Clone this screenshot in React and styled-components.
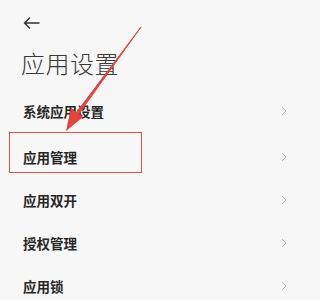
import React from "react";
import styled, { createGlobalStyle } from "styled-components";

const Global = createGlobalStyle`
  html, body { margin: 0; padding: 0; background: #f7f7f7; }
  body { font-family: "Noto Sans CJK SC", "Noto Sans", sans-serif; }
`;

const Page = styled.div`
  position: relative;
  width: 308px;
  height: 300px;
  overflow: hidden;
  background: #f7f7f7;
`;

const Header = styled.div`
  display: flex;
  align-items: center;
  height: 22px;
  padding: 12px 0 0 23px;
`;

const Title = styled.h1`
  margin: 17px 0 0 21px;
  font-size: 24px;
  line-height: 24px;
  font-weight: 300;
  color: #3a3a3a;
  letter-spacing: 0.5px;
`;

const List = styled.div`
  display: flex;
  flex-direction: column;
  margin-top: 14px;
`;

const Row = styled.div`
  position: relative;
  display: flex;
  align-items: center;
  justify-content: space-between;
  height: 43px;
  padding: 0 21px 0 23px;
  margin-bottom: ${(p) => (p.$first ? "3px" : "0")};
`;

const Label = styled.span`
  font-size: 13.5px;
  font-weight: 700;
  color: #262626;
`;

const Highlight = styled.div`
  position: absolute;
  left: 9px;
  top: -3px;
  width: 131px;
  height: 39px;
  border: 1.5px solid #e0514f;
`;

const Overlay = styled.svg`
  position: absolute;
  left: 0;
  top: 0;
  pointer-events: none;
`;

const Chevron = () => (
  <svg width="6" height="10" viewBox="0 0 6 10">
    <path d="M1 1 L5 5 L1 9" fill="none" stroke="#b8b8b8" strokeWidth="1" />
  </svg>
);

const BackArrow = () => (
  <svg width="17" height="12" viewBox="0 0 17 12">
    <path d="M16 6 H1.5 M6.5 1 L1.5 6 L6.5 11" fill="none" stroke="#333" strokeWidth="1.5" strokeLinecap="round" strokeLinejoin="round" />
  </svg>
);

const items = ["系统应用设置", "应用管理", "应用双开", "授权管理", "应用锁"];

export default function App() {
  return (
    <>
      <Global />
      <Page>
        <Header>
          <BackArrow />
        </Header>
        <Title>应用设置</Title>
        <List>
          {items.map((t, i) => (
            <Row key={t} $first={i === 0}>
              <Label>{t}</Label>
              <Chevron />
              {i === 1 && <Highlight />}
            </Row>
          ))}
        </List>
        <Overlay width="308" height="300" viewBox="0 0 308 300">
          <path d="M141 27 L76 113 L78 115 Z" fill="#e5423b" stroke="#e5423b" strokeWidth="1" strokeLinejoin="round" />
          <path d="M66 131 L71 108 L83 117 Z" fill="#e5423b" />
        </Overlay>
      </Page>
    </>
  );
}
